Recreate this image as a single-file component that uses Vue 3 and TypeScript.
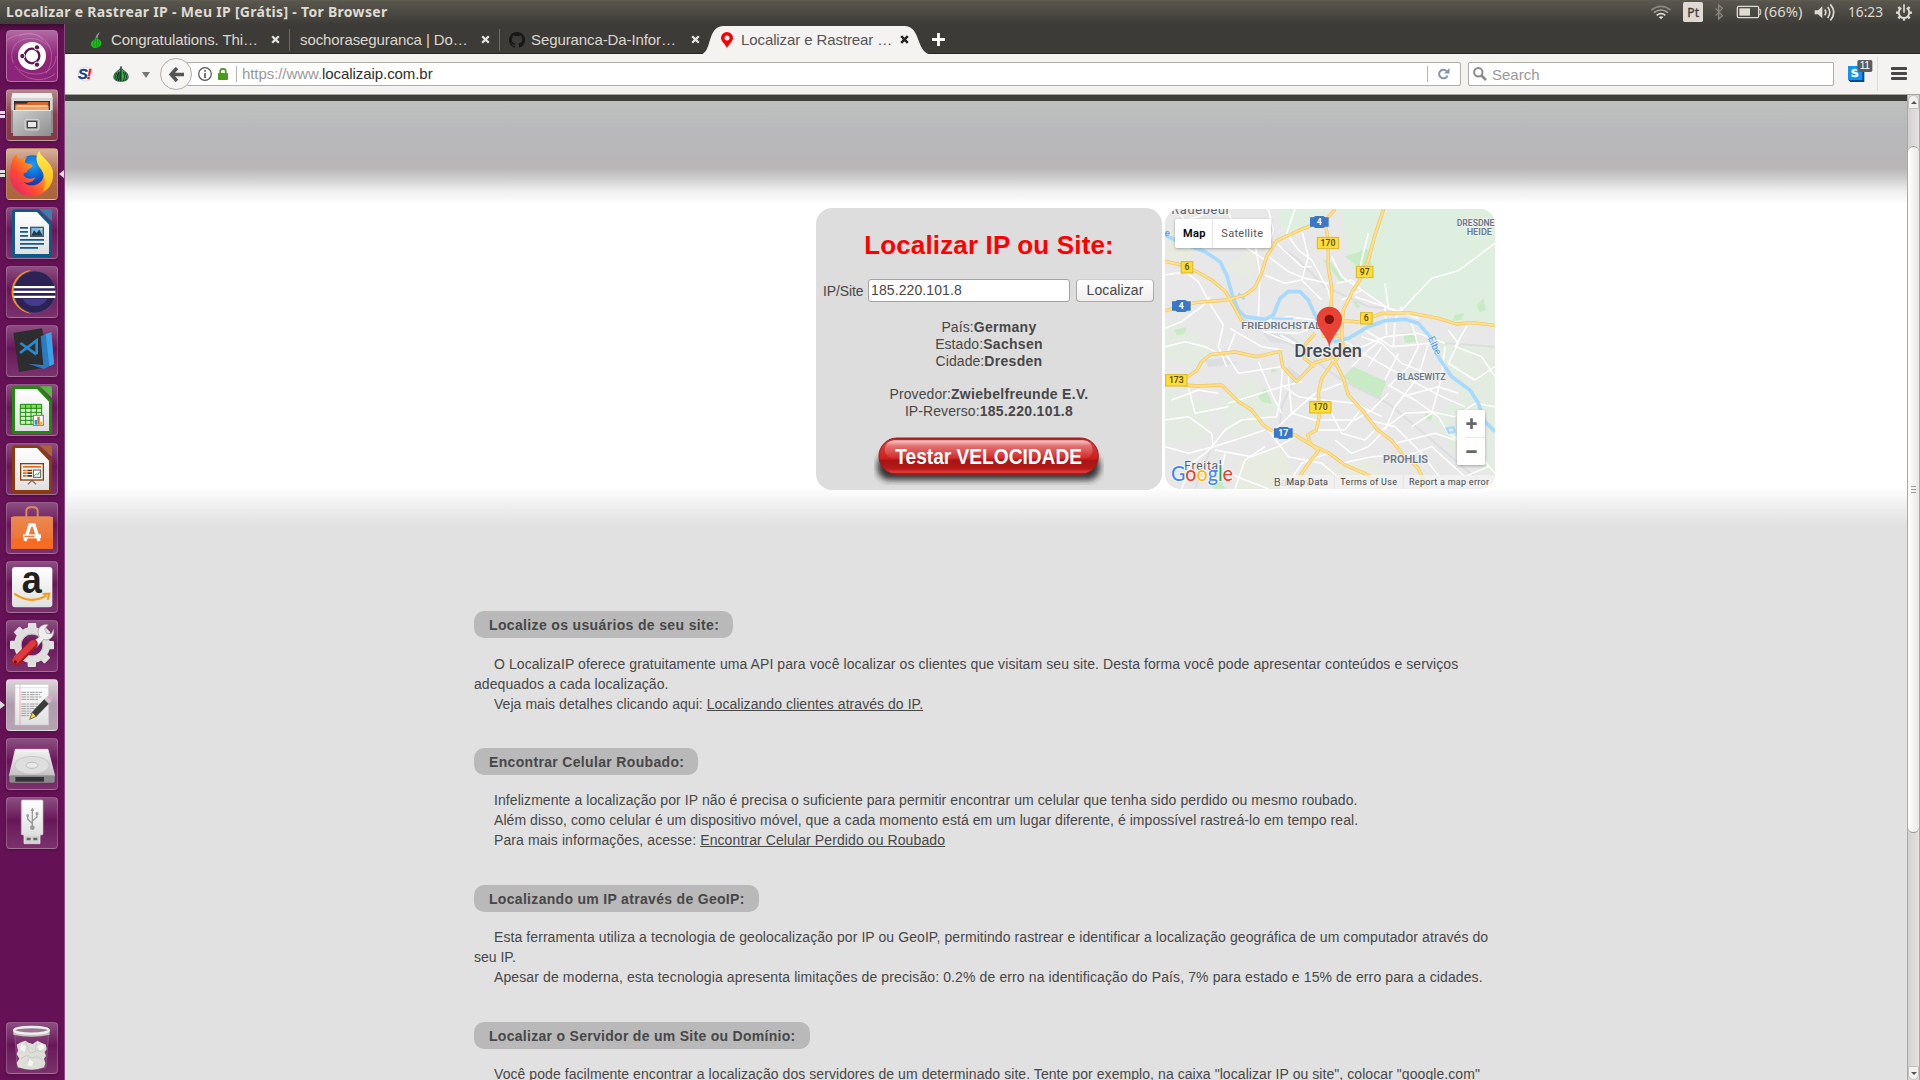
<script setup lang="ts">
interface Tab { title: string; kind: string; width: number }
interface Line { text: string; link?: string; indent: boolean; ls: number }
interface Section { title: string; ls: number; lines: Line[] }

const tabs: Tab[] = [
  { title: 'Congratulations. Thi…', kind: 'onion', width: 211 },
  { title: 'sochoraseguranca | Do…', kind: 'none', width: 210 },
  { title: 'Seguranca-Da-Infor…', kind: 'github', width: 203 },
]

const sections: Section[] = [
  {
    title: 'Localize os usuários de seu site:', ls: 0.35,
    lines: [
      { text: 'O LocalizaIP oferece gratuitamente uma API para você localizar os clientes que visitam seu site. Desta forma você pode apresentar conteúdos e serviços', indent: true, ls: 0.08 },
      { text: 'adequados a cada localização.', indent: false, ls: 0.08 },
      { text: 'Veja mais detalhes clicando aqui: ', link: 'Localizando clientes através do IP.', indent: true, ls: 0.053 },
    ],
  },
  {
    title: 'Encontrar Celular Roubado:', ls: 0.33,
    lines: [
      { text: 'Infelizmente a localização por IP não é precisa o suficiente para permitir encontrar um celular que tenha sido perdido ou mesmo roubado.', indent: true, ls: 0.08 },
      { text: 'Além disso, como celular é um dispositivo móvel, que a cada momento está em um lugar diferente, é impossível rastreá-lo em tempo real.', indent: true, ls: 0.055 },
      { text: 'Para mais informações, acesse: ', link: 'Encontrar Celular Perdido ou Roubado', indent: true, ls: 0.1 },
    ],
  },
  {
    title: 'Localizando um IP através de GeoIP:', ls: 0.31,
    lines: [
      { text: 'Esta ferramenta utiliza a tecnologia de geolocalização por IP ou GeoIP, permitindo rastrear e identificar a localização geográfica de um computador através do', indent: true, ls: 0.08 },
      { text: 'seu IP.', indent: false, ls: 0 },
      { text: 'Apesar de moderna, esta tecnologia apresenta limitações de precisão: 0.2% de erro na identificação do País, 7% para estado e 15% de erro para a cidades.', indent: true, ls: 0.115 },
    ],
  },
  {
    title: 'Localizar o Servidor de um Site ou Domínio:', ls: 0.29,
    lines: [
      { text: 'Você pode facilmente encontrar a localização dos servidores de um determinado site. Tente por exemplo, na caixa "localizar IP ou site", colocar "google.com"', indent: true, ls: 0.065 },
    ],
  },
]

const highways = [
  'M540 27 L515 58 L430 92 L365 122 L335 170 L318 225 L300 262 L270 285 L215 300 L120 308 L70 320 L30 333',
  'M30 184 L80 195 L120 212 L170 240 L212 275 L240 325 L262 365 L290 382',
  'M510 60 L520 130 L520 205 L530 260 L528 330 L535 400',
  'M686 27 L660 105 L640 180 L615 240 L592 275 L565 330 L560 400 L565 450 L540 485',
  'M565 362 L610 366 L680 340 L760 338 L850 355 L905 372 L950 368 L1020 376',
  'M30 535 L95 532 L125 512 L140 485 L165 464 L240 456 L305 470 L375 454 L383 500 L425 545 L480 488 L540 470',
  'M30 540 L65 552 L125 558 L200 555 L250 605 L290 630 L325 675 L350 692 L420 705 L470 735 L520 758 L570 795 L640 825 L680 866',
  'M535 485 L500 535 L490 580 L494 640 L484 690 L458 705 L466 730 L490 752 L450 805 L430 835',
  'M540 485 L565 535 L580 585 L625 635 L668 690 L710 722 L745 765 L790 805 L815 866',
  'M480 400 L452 432 L448 475 L480 500', 'M500 408 L560 408',
]
const streets = [
  'M30 225 L90 215 L130 245 L170 320 L205 375 L190 440 L215 500', 'M30 385 L80 365 L140 320 L165 290',
  'M30 440 L90 425 L150 440 L190 460', 'M60 27 L90 60 L130 50 L180 27', 'M150 100 L200 130 L240 120 L330 180',
  'M215 27 L240 80 L300 130 L315 220 L310 350', 'M340 27 L355 90 L340 140', 'M420 27 L395 100 L430 150 L470 180 L520 270 L530 330',
  'M340 170 L400 215 L450 235 L520 250', 'M330 225 L390 250 L440 240 L500 300', 'M365 130 L440 200 L470 200', 'M440 90 L460 170 L440 240',
  'M530 170 L560 230 L620 270 L700 325 L735 335', 'M735 335 L830 235 L910 212 L1020 130', 'M545 250 L590 240 L620 270 L560 300', 'M600 290 L690 320 L695 405',
  'M740 320 L720 360 L715 440', 'M640 100 L620 180 L610 230', 'M690 250 L700 325 L790 355', 'M320 365 L400 350 L480 360 L500 390', 'M313 365 L325 395 L440 440', 'M325 395 L430 400 L480 380',
  'M225 385 L320 440 L380 450', 'M240 400 L215 465 L250 520 L380 500', 'M375 405 L450 445', 'M380 555 L430 590 L500 600 L600 610 L680 650', 'M383 500 L375 600 L365 650 L260 660 L210 690 L170 740',
  'M220 610 L380 560 L440 545', 'M310 485 L350 580 L380 640', 'M400 530 L410 640 L480 660 L600 660 L650 630 L700 580', 'M350 700 L400 650 L480 580 L560 550', 'M520 620 L560 700 L630 720 L660 690', 'M480 690 L570 690 L620 625',
  'M565 420 L640 470 L720 515 L860 590 L930 620', 'M590 500 L640 450 L690 410', 'M630 390 L710 440 L770 435 L820 430', 'M620 410 L680 430 L740 490 L840 530', 'M640 500 L680 440', 'M690 540 L730 460',
  'M700 560 L760 500 L790 440 L770 370', 'M600 450 L690 410 L790 400 L870 430', 'M820 430 L790 530 L720 620 L690 690', 'M870 440 L860 530 L830 640 L770 680', 'M700 555 L780 600 L850 650 L880 700 L960 750 L1020 820', 'M740 590 L850 560 L910 580',
  'M680 690 L750 640 L830 635 L900 650 L960 610 L1020 620', 'M880 390 L910 430 L880 490 L960 540 L1020 500', 'M940 370 L900 440 L980 470 L1020 530', 'M640 660 L720 680 L800 760 L880 866', 'M720 730 L840 700 L900 720', 'M750 770 L830 740 L930 830 L1000 800',
  'M50 600 L130 570 L190 580', 'M100 560 L120 640 L220 620', 'M30 660 L100 650 L170 700 L175 740', 'M175 740 L110 790 L80 866', 'M175 740 L240 720 L330 690', 'M180 750 L290 770 L370 740 L420 710', 'M240 866 L270 780 L330 740', 'M210 760 L200 810 L270 840 L340 866',
  'M340 690 L400 770 L500 790 L560 840', 'M390 866 L440 790 L520 760', 'M30 740 L100 760 L175 740', 'M540 720 L590 760 L640 740 L680 700', 'M560 790 L650 770 L740 765',
]
const shields = [
  { x: 519, y: 129, w: 64, t: '170' }, { x: 96, y: 202, w: 35, t: '6' }, { x: 629, y: 216, w: 50, t: '97' },
  { x: 634, y: 355, w: 35, t: '6' }, { x: 64, y: 541, w: 64, t: '173' }, { x: 496, y: 622, w: 64, t: '170' },
]
const autobahn = [{ x: 493, y: 66, t: '4' }, { x: 79, y: 318, t: '4' }, { x: 385, y: 699, t: '17' }]
const teeth = [45, 90, 135, 180, 225, 270, 315]
</script>

<template>
  <div class="desktop">
    <header class="panel">
      <span class="win-title">Localizar e Rastrear IP - Meu IP [Grátis] - Tor Browser</span>
      <svg class="tray" viewBox="750 0 810 72">
        <g fill="none" stroke="#8b897f" stroke-width="5">
          <path d="M754 30q29-22 58 0" /><path d="M762 38q21-16 42 0" stroke="#a9a69c" />
          <path d="M770 46q13-10 26 0" stroke="#dfdbd2" />
        </g>
        <path d="M776 51q7-4 14 0l-7 7z" fill="#dfdbd2" />
        <rect x="849" y="6" width="60" height="60" rx="5" fill="#dfdbd2" />
        <text x="862" y="51" class="kbd" font-size="38" textLength="35" lengthAdjust="spacingAndGlyphs">Pt</text>
        <path d="M947 25l20 22-11 10V15l11 10-20 22" fill="none" stroke="#8b897f" stroke-width="4" />
        <rect x="1012" y="19" width="64" height="34" rx="4" fill="none" stroke="#dfdbd2" stroke-width="4" />
        <rect x="1018" y="25" width="32" height="22" fill="#dfdbd2" /><path d="M1077 29h5v14h-5" fill="none" stroke="#dfdbd2" stroke-width="3" />
        <text x="1093" y="51" font-size="42" textLength="114" lengthAdjust="spacingAndGlyphs">(66%)</text>
        <path d="M1244 31h10l13-12v36l-13-12h-10z" fill="#dfdbd2" />
        <path d="M1274 29q7 8 0 17M1283 21q13 16 0 33M1291 13q21 24 0 48" fill="none" stroke="#dfdbd2" stroke-width="5" />
        <text x="1344" y="51" font-size="42" textLength="105" lengthAdjust="spacingAndGlyphs">16:23</text>
        <g stroke="#dfdbd2" fill="none">
          <path d="M1504 24a16 16 0 1 0 16 0" stroke-width="6" /><path d="M1512 13v25" stroke-width="5" />
          <path v-for="a in teeth" :key="a" d="M1512 14v7" :transform="`rotate(${a} 1512 38)`" stroke-width="7" />
        </g>
      </svg>
    </header>

    <div class="workspace">
      <aside class="launcher">
        <svg class="shared" width="0" height="0">
          <defs>
            <linearGradient id="paper" x1="0" y1="0" x2="0" y2="1"><stop offset="0" stop-color="#fff" /><stop offset="1" stop-color="#e0e0e0" /></linearGradient>
            <linearGradient id="metal" x1="0" y1="0" x2="0" y2="1"><stop offset="0" stop-color="#f2f2f2" /><stop offset="1" stop-color="#c2c2c2" /></linearGradient>
            <linearGradient id="drawer" x1="0" y1="0" x2="1" y2="1"><stop offset="0" stop-color="#cfcfcf" /><stop offset="1" stop-color="#8e8e8e" /></linearGradient>
            <linearGradient id="bag" x1="0" y1="0" x2="0" y2="1"><stop offset="0" stop-color="#e98a52" /><stop offset="1" stop-color="#f26a26" /></linearGradient>
            <linearGradient id="fox" x1="1" y1="0" x2="0" y2="1"><stop offset="0" stop-color="#fff44f" /><stop offset=".35" stop-color="#ffa11c" /><stop offset=".65" stop-color="#ff4a32" /><stop offset="1" stop-color="#e0148c" /></linearGradient>
            <linearGradient id="flame" x1="0" y1="0" x2="0" y2="1"><stop offset="0" stop-color="#fff24a" /><stop offset="1" stop-color="#ffb01c" /></linearGradient>
            <radialGradient id="globe" cx=".5" cy=".3" r=".7"><stop offset="0" stop-color="#1ba0f5" /><stop offset=".7" stop-color="#0a50c8" /><stop offset="1" stop-color="#3a1a80" /></radialGradient>
          </defs>
        </svg>

        <div class="tile ubuntu"><svg viewBox="0 0 156 156">
          <g fill="none" stroke="#dca5d0" stroke-width="2" opacity=".6"><path d="M22 100C-4 30 80 0 130 50M40 18c60-30 130 40 80 112M150 78c0 50-60 70-110 40" /><path d="M28 108c30 50 90 50 120 22M4 30C30 10 90 0 110 30" /></g>
          <circle cx="78" cy="78" r="42" fill="#fff" /><circle cx="78" cy="78" r="22" fill="none" stroke="#5e1750" stroke-width="7" />
          <g fill="#5e1750" stroke="#fff" stroke-width="3"><circle cx="49" cy="78" r="8" /><circle cx="93" cy="52" r="8" /><circle cx="93" cy="104" r="8" /></g>
        </svg></div>
        <div class="tile files"><svg viewBox="0 0 156 156">
          <path d="M15 28l4-16h118l4 16v104H15z" fill="#8d8d8d" /><path d="M19 12h118l3 17H16z" fill="#f0f0f0" />
          <path d="M16 26h124v38H16z" fill="#d5d5d5" /><path d="M24 36h108v34H24z" fill="#333" /><path d="M28 44h34l5-5h60v30H28z" fill="#d8672e" /><path d="M28 50h100v18H28z" fill="#f4a15d" /><path d="M32 49h92v3H32z" fill="#fff" />
          <path d="M21 63h114v78H21z" fill="url(#drawer)" /><path d="M21 63h114v3H21z" fill="#eee" />
          <rect x="57" y="91" width="42" height="32" rx="5" fill="#b9b9b9" stroke="#e8e8e8" stroke-width="2" /><rect x="64" y="97" width="28" height="19" fill="#e8e8e8" stroke="#444" stroke-width="4" />
        </svg><i class="pips two" /></div>
        <div class="tile firefox"><svg viewBox="0 0 156 156">
          <circle cx="80" cy="70" r="48" fill="url(#globe)" />
          <path d="M18 42c2-14 10-20 14-24 0 10 4 14 10 16 10-4 14-6 22-7-6 6-8 12-6 18 8 2 18 2 22 8-2 6-12 10-16 14 2 8-10 6-12 12 2 12 24 18 36 8-4 14-22 22-36 14 16 18 52 14 60-14 4-18-4-30-16-44-8-14-2-26 4-34 2 14 20 22 32 46 22 48-12 90-54 90C40 145 12 118 12 82c0-16 2-28 6-40z" fill="url(#fox)" />
          <path d="M100 9c2 18 34 30 40 58 6 34-10 56-30 64 8-12 12-40-4-66-18-22-18-40-6-56z" fill="url(#flame)" />
        </svg><i class="pips two" /><i class="active-mark" /></div>
        <div class="tile"><svg viewBox="0 0 156 156">
          <path d="M18 14q0-7 7-7h73l40 42v93q0 8-8 8H25q-7 0-7-8z" fill="#0d5a8a" /><path d="M102 7h30q6 0 6 6v29z" fill="#3c7fae" />
          <path d="M27 15h66l36 38v88H27z" fill="url(#paper)" />
          <g fill="#0e5b8c"><path d="M42 60h24v5H42zM42 72h24v5H42zM42 84h24v5H42zM42 96h72v5H42zM42 108h72v5H42zM42 120h54v5H42z" /></g>
          <rect x="74" y="61" width="38" height="27" fill="#7dbce8" stroke="#3c5a72" stroke-width="4" /><path d="M76 86l8-16 8 8 8-10 10 18z" fill="#2b3b45" /><circle cx="106" cy="66" r="3" fill="#ffd94a" />
        </svg></div>
        <div class="tile"><svg viewBox="0 0 156 156">
          <path d="M75 12A66 66 0 0 0 74 143A80 80 0 0 1 75 12z" fill="#f7941e" /><circle cx="86" cy="78" r="63" fill="#2c2255" stroke="#58508a" stroke-width="2" /><path d="M50 98h74q-10 22-37 22T50 98z" fill="#463a8c" />
          <path d="M24 60h122v7H23zM22 74h126v7H22zM23 89h125v7H24z" fill="#fff" />
        </svg></div>
        <div class="tile"><svg viewBox="0 0 156 156">
          <path d="M22 24l86-14 25 115-94 16z" fill="#2d2d30" /><path d="M104 34l32-13 8 96-30 15-48-16 46 4z" fill="#2a7bc0" /><path d="M119 27l17-6 8 96-14 7z" fill="#3ea0e6" />
          <path d="M43 54l48 34M42 84l50-38v42" fill="none" stroke="#2a8ad0" stroke-width="8" />
        </svg></div>
        <div class="tile"><svg viewBox="0 0 156 156">
          <path d="M18 14q0-7 7-7h73l40 42v93q0 8-8 8H25q-7 0-7-8z" fill="#1f8a0c" /><path d="M102 7h30q6 0 6 6v29z" fill="#58b845" /><path d="M27 15h66l36 38v88H27z" fill="url(#paper)" />
          <path d="M43 61h64v60H43z" fill="#d9f5cd" /><path d="M43 61h64v12H43z" fill="#7fdc5f" /><path d="M43 61h64v60H43zM43 73h64M43 85h64M43 97h64M43 109h64M59 61v60M75 61v60M91 61v60" fill="none" stroke="#178a08" stroke-width="3" />
          <rect x="82" y="94" width="30" height="30" fill="#fff" stroke="#777" stroke-width="3" /><path d="M86 108h7v14h-7z" fill="#2196e0" /><path d="M94 98h7v24h-7z" fill="#e0651c" /><path d="M102 113h7v9h-7z" fill="#f3b820" />
        </svg></div>
        <div class="tile"><svg viewBox="0 0 156 156">
          <path d="M18 14q0-7 7-7h73l40 42v93q0 8-8 8H25q-7 0-7-8z" fill="#8a3c0c" /><path d="M102 7h30q6 0 6 6v29z" fill="#ad642f" /><path d="M27 15h66l36 38v88H27z" fill="url(#paper)" />
          <path d="M66 124l12-12 12 12" fill="none" stroke="#777" stroke-width="4" /><rect x="44" y="62" width="68" height="49" fill="#fffaf4" stroke="#8a3c0c" stroke-width="4" /><path d="M51 69h54v5H51z" fill="#e06a20" />
          <path d="M51 80h11v5H51zM51 88h11v5H51zM51 96h11v5H51z" fill="#e06a20" /><path d="M64 80h14v5H64zM64 88h14v5H64zM64 96h14v5H64z" fill="#6b2d08" /><rect x="82" y="81" width="22" height="22" fill="#fff" stroke="#555" stroke-width="3" /><path d="M85 98l6-5 4 3 6-10" fill="none" stroke="#27a036" stroke-width="3" />
        </svg></div>
        <div class="tile"><svg viewBox="0 0 156 156">
          <path d="M15 46l10-3h106l10 3v94H15z" fill="url(#bag)" /><path d="M15 110h126v30H15z" fill="#f56c22" /><path d="M61 52V28q0-13 17-13t17 13v24" fill="none" stroke="#d98a62" stroke-width="6" />
          <path d="M57 117l15-48h12l15 48" fill="none" stroke="#fff" stroke-width="10" /><path d="M51 97h54v12H51z" fill="#fff" /><path d="M55 101h30v4H55z" fill="#f0783a" />
        </svg></div>
        <div class="tile"><svg viewBox="0 0 156 156">
          <rect x="18" y="18" width="121" height="121" rx="10" fill="url(#paper)" /><text x="47" y="95" class="amazon" textLength="60" lengthAdjust="spacingAndGlyphs">a</text>
          <path d="M25 98q48 34 96 6" fill="none" stroke="#f79b10" stroke-width="6" /><path d="M110 99l20-1-5 18" fill="none" stroke="#f79b10" stroke-width="6" />
        </svg></div>
        <div class="tile"><svg viewBox="0 0 156 156">
          <g fill="#e2e2e2"><rect v-for="a in [0, 45, 90, 135, 180, 225, 270, 315]" :key="a" x="66" y="9" width="25" height="30" rx="3" :transform="`rotate(${a} 78 75)`" /></g>
          <circle cx="78" cy="75" r="43" fill="none" stroke="#dedede" stroke-width="22" /><circle cx="78" cy="75" r="33" fill="none" stroke="#bcbcbc" stroke-width="3" />
          <path d="M100 50c-12-22 6-40 26-36l-10 14 6 12 14 1 7-13c4 24-16 36-30 30L92 82 78 68z" fill="#eee" stroke="#999" stroke-width="2" /><path d="M30 124l52-52" stroke="#a91b1e" stroke-width="27" stroke-linecap="round" /><path d="M29 122l52-52" stroke="#dc3a3d" stroke-width="19" stroke-linecap="round" /><circle cx="28" cy="126" r="5" fill="#701014" />
        </svg></div>
        <div class="tile editor"><svg viewBox="0 0 156 156">
          <path d="M27 16h101v122H27z" fill="url(#paper)" stroke="#c8c8c8" stroke-width="2" /><path d="M42 16v122" stroke="#ee9a9a" stroke-width="2" /><path d="M27 26h101" stroke="#b9d9ff" stroke-width="2" />
          <path d="M46 40h62M46 47h56M46 54h60M46 61h50M46 75h54M46 82h48M46 89h44M46 96h30M46 103h34M46 110h26" stroke="#8c8c8c" stroke-width="2.5" stroke-dasharray="14 2 8 2" />
          <path d="M71 121l8-22 12 13z" fill="#e9d44a" stroke="#4a441a" stroke-width="2" /><path d="M79 99l36-38 13 13-37 38z" fill="#3c3c3c" stroke="#222" /><path d="M115 61l8-8 14 13-9 8z" fill="#c8c8c8" /><path d="M123 53q9-9 17 1 1 6-4 11z" fill="#eca0cc" />
        </svg><i class="pips one" /></div>
        <div class="tile"><svg viewBox="0 0 156 156">
          <path d="M28 34h98l20 80H10z" fill="url(#metal)" stroke="#eee" stroke-width="2" /><path d="M10 112h136v18q0 4-5 4H15q-5 0-5-4z" fill="#8b8b8b" /><path d="M28 117h86v14H28z" fill="#333" /><ellipse cx="78" cy="82" rx="52" ry="27" fill="#dedede" stroke="#bdbdbd" stroke-width="2" /><ellipse cx="78" cy="82" rx="18" ry="9" fill="#e8e8e8" stroke="#aaa" stroke-width="2" />
        </svg></div>
        <div class="tile"><svg viewBox="0 0 156 156">
          <rect x="46" y="9" width="65" height="105" rx="4" fill="url(#paper)" stroke="#bbb" stroke-width="2" /><path d="M54 114h48v26H54z" fill="#d2d2d2" stroke="#eee" stroke-width="2" /><path d="M62 122h12v8H62zM82 122h12v8H82z" fill="#666" />
          <path d="M79 92V38M79 80l-14-14V56M79 72l14-12V50" fill="none" stroke="#999" stroke-width="4" /><path d="M79 32l6 10H73z" fill="#999" /><circle cx="79" cy="92" r="7" fill="#999" /><circle cx="65" cy="56" r="4" fill="#999" /><path d="M89 46h8v8h-8z" fill="#999" />
        </svg></div>
        <div class="tile trash"><svg viewBox="0 0 156 156">
          <path d="M26 38l8 98q42 14 86 0l8-98z" fill="rgba(255,255,255,.08)" stroke="rgba(255,255,255,.25)" stroke-width="2" />
          <path d="M32 68l14-8 12-4 10 6 12 4 14-10 12 6 14 6 2 14-6 8 4 12-6 8 4 14-4 12q-36 14-78 0l-4-14 8-12-8-14 4-10z" fill="#deded9" /><path d="M42 72l20 6 12 16 18-8 20 4M44 110l18-10 16 8 14-4 18 8M58 60l10 20M92 62l-4 22M66 110l10 26" fill="none" stroke="#c0c0ba" stroke-width="2" />
          <path d="M46 64l14 10-4 16-14-8zM94 74l14-10 8 12-14 10zM70 112l12 8-4 14-14-4z" fill="#f4f4f1" />
          <path d="M22 24v14q54 12 109 0V24z" fill="#c6c6c0" /><ellipse cx="76.500" cy="25" rx="52" ry="10" fill="#9a7a92" stroke="#efefec" stroke-width="7" />
        </svg></div>
      </aside>

      <main class="browser">
        <div class="tabbar">
          <div v-for="t in tabs" :key="t.title" class="tab" :class="t.kind" :style="{ width: t.width + 'px' }">
            <svg v-if="t.kind === 'onion'" class="fav" viewBox="0 0 48 48"><path d="M22 20q2-14 14-20-7 12-8 20z" fill="#9a9a9a" /><path d="M25 14q0 6 10 10 8 6 4 16-6 8-14 8-14 0-16-10-1-10 9-14 6-4 7-10z" fill="#17c21a" /><path d="M25 18v28M19 24q-5 10 0 20M31 24q5 10 0 20" stroke="#0b7a0e" stroke-width="2" fill="none" /></svg>
            <svg v-if="t.kind === 'github'" class="fav" viewBox="0 0 16 16"><path fill="#191717" d="M8 0C3.580 0 0 3.580 0 8c0 3.540 2.290 6.530 5.470 7.590.4.070.55-.17.55-.38v-1.340c-2.230.48-2.700-1.070-2.700-1.070-.36-.92-.89-1.170-.89-1.170-.73-.5.06-.49.06-.49.8.06 1.230.83 1.230.83.71 1.220 1.870.87 2.330.66.070-.52.28-.87.51-1.070-1.780-.2-3.640-.89-3.640-3.950 0-.87.31-1.590.82-2.150-.08-.2-.36-1.020.08-2.120 0 0 .67-.21 2.200.82a7.600 7.600 0 0 1 4 0c1.530-1.040 2.200-.82 2.200-.82.44 1.100.16 1.920.08 2.120.51.56.82 1.270.82 2.150 0 3.070-1.870 3.750-3.650 3.950.29.250.54.73.54 1.480v2.190c0 .21.15.46.55.38A8 8 0 0 0 8 0z" /></svg>
            <span class="tab-title">{{ t.title }}</span>
            <svg class="close" viewBox="0 0 9 9"><path d="M1.200 1.200l6.600 6.600M7.800 1.200L1.200 7.800" stroke="#e6e6e0" stroke-width="2.300" /></svg>
          </div>
          <div class="tab current">
            <svg class="tab-shape" viewBox="0 0 234 29" preserveAspectRatio="none"><path d="M0 29C14 28 7 1 24 0H206C223 1 216 28 234 29z" fill="#f4f3f2" /></svg>
            <svg class="pin-fav" viewBox="0 0 12 16"><path fill-rule="evenodd" d="M6 0a6 6 0 0 1 6 6c0 3-4 6-6 10C4 12 0 9 0 6a6 6 0 0 1 6-6zm0 3.500a2.500 2.500 0 1 0 0 5 2.500 2.500 0 0 0 0-5z" fill="#fb0000" /></svg>
            <span class="tab-title">Localizar e Rastrear …</span>
            <svg class="close" viewBox="0 0 9 9"><path d="M1.200 1.200l6.600 6.600M7.800 1.200L1.200 7.800" stroke="#222" stroke-width="2.500" /></svg>
          </div>
          <svg class="plus" viewBox="0 0 13 13"><path d="M6.500 0v13M0 6.500h13" stroke="#fff" stroke-width="2.800" /></svg>
        </div>

        <nav class="navbar">
          <svg class="ext" viewBox="0 0 48 48"><circle cx="25" cy="24" r="21" fill="#fff" stroke="#ccc" stroke-width="2" /><text x="3" y="40" class="ns-s">S</text><text x="29" y="40" class="ns-b">!</text></svg>
          <svg class="tor" viewBox="0 0 48 48"><path d="M24 1q1 9 9 13 13 8 13 18 0 14-22 14T2 32q0-10 13-18 8-4 9-13z" fill="#3fae55" stroke="#222" stroke-width="2" /><path d="M24 5v40q-10-2-12-12 0-10 10-17z" fill="#1f5c33" /><path d="M24 8v38M31 17q8 14 0 28M36 19q9 14 2 24M17 17q-9 14 0 28M11 21q-8 12 0 21" fill="none" stroke="#101c14" stroke-width="2.500" /></svg>
          <svg class="caret" viewBox="0 0 8 6"><path d="M0 0h8L4 6z" fill="#777" /></svg>
          <div class="back"><svg viewBox="0 0 15 15"><path d="M8 1L2 7.500 8 14M2 7.500h13" fill="none" stroke="#555" stroke-width="3.400" /></svg></div>
          <div class="urlbar">
            <svg class="info" viewBox="0 0 14 14"><circle cx="7" cy="7" r="6.300" fill="none" stroke="#555" stroke-width="1.200" /><path d="M7 6v5M7 3v1.800" stroke="#555" stroke-width="1.600" /></svg>
            <svg class="lock" viewBox="0 0 10 12"><path d="M2.200 6V3.600a2.800 2.800 0 0 1 5.600 0V6" fill="none" stroke="#4e9a1e" stroke-width="1.700" /><rect y="5" width="10" height="7" rx=".8" fill="#4e9a1e" /></svg>
            <span class="divider" />
            <span class="url"><span class="proto">https://www.</span>localizaip.com.br</span>
            <span class="divider right" />
            <svg class="reload" viewBox="0 0 12 12"><path d="M9.500 7.500A4.300 4.300 0 1 1 8.500 3" fill="none" stroke="#8494a4" stroke-width="2" /><path d="M11.500 0v5.500H6z" fill="#8494a4" /></svg>
          </div>
          <div class="search"><svg viewBox="0 0 14 14"><circle cx="5.300" cy="5.300" r="4.200" fill="none" stroke="#8b8b8b" stroke-width="2" /><path d="M8.500 8.500l4.500 4.500" stroke="#8b8b8b" stroke-width="2.600" /></svg><span>Search</span></div>
          <svg class="stylish" viewBox="0 0 75 66"><path d="M1 18h42l6 6v42H7l-6-6z" fill="#004a87" /><path d="M1 18h42v42H1z" fill="#0996f8" /><text x="8" y="51" class="st-s">S</text><rect x="28" y="0" width="45" height="36" rx="5" fill="#5c5c5c" /><text x="35" y="28" class="st-n" textLength="31">11</text></svg>
          <span class="nav-sep" />
          <div class="menu"><i /><i /><i /></div>
        </nav>

        <div class="viewport">
          <div class="page">
            <div class="hero">
              <div class="card">
                <h1>Localizar IP ou Site:</h1>
                <form class="lookup" @submit.prevent>
                  <label>IP/Site</label><input type="text" value="185.220.101.8" /><button type="button">Localizar</button>
                </form>
                <div class="facts">
                  <div>País:<b>Germany</b></div><div>Estado:<b>Sachsen</b></div><div>Cidade:<b>Dresden</b></div><div>&nbsp;</div>
                  <div>Provedor:<b>Zwiebelfreunde E.V.</b></div><div>IP-Reverso:<b>185.220.101.8</b></div>
                </div>
                <svg class="speed" viewBox="0 0 690 150">
                  <defs>
                    <linearGradient id="red" x1="0" y1="0" x2="0" y2="1"><stop offset="0" stop-color="#b01a1a" /><stop offset=".12" stop-color="#d83a3a" /><stop offset=".55" stop-color="#cf2020" /><stop offset=".62" stop-color="#a81414" /><stop offset=".85" stop-color="#b81a1a" /><stop offset=".94" stop-color="#e83c3c" /><stop offset="1" stop-color="#8d1010" /></linearGradient>
                    <linearGradient id="gloss" x1="0" y1="0" x2="0" y2="1"><stop offset="0" stop-color="#fff" stop-opacity=".75" /><stop offset=".3" stop-color="#fff" stop-opacity=".3" /><stop offset="1" stop-color="#fff" stop-opacity=".03" /></linearGradient>
                    <filter id="soft" x="-10%" y="-50%" width="120%" height="200%"><feGaussianBlur stdDeviation="9" /></filter>
                  </defs>
                  <rect x="10" y="55" width="668" height="80" rx="37" fill="#222" opacity=".9" filter="url(#soft)" />
                  <rect x="15" y="9" width="658" height="109" rx="54" fill="url(#red)" stroke="#96201f" stroke-width="3" /><rect x="32" y="16" width="624" height="56" rx="28" fill="url(#gloss)" />
                  <text x="64" y="86" textLength="560" lengthAdjust="spacingAndGlyphs">Testar VELOCIDADE</text>
                </svg>
              </div>

              <div class="map">
                <svg viewBox="30 27 990 840">
                  <rect x="30" y="27" width="990" height="840" fill="#e8e8e8" />
                  <path d="M560 27h460v345l-120-5-90-30-90-14-100-55-40-100z" fill="#deefdf" /><path d="M370 27h150l-25 35-110 40z" fill="#deefdf" />
                  <path d="M30 360l90 40 60 70-60 30-90-30zM30 570l150 40-30 100-120 20zM200 590l90-60 80 90-100 100-60-30zM830 420l190 20v240l-90-60-60-110z" fill="#e4ece1" />
                  <path d="M250 780l130-40 60 126H240zM500 800l160-20 60 86H530zM60 60l100 50-70 80-60-20zM200 200l110-60-20 100z" fill="#e8ebe0" /><path d="M820 650l150-80 50 80v180l-110-60z" fill="#e2ece0" />
                  <path d="M570 170l70-24 10 50-40 5zM565 530l30-30 100 45-20 50-60-22zM500 175l30 15 40 55-10 5zM600 300l18 20-14 5-10-18zM745 400l30-4 14 30-40 2zM900 345l28-6-8 20-28 4zM965 315l20-20 8 35-20 8zM810 640l22 6-4 18-14-8zM310 590l20-28 22 50-30-5zM60 390l34-8-6 20-24 4zM350 500l18 14-20 4zM170 840l30 6 10 20h-35z" fill="#c8ebc5" />
                  <path d="M318 395l90 10 30 30-90-8zM400 500l40 30-20 20-30-35zM150 480l50-6 50 16-90 12z" fill="#dcdee1" />
                  <g fill="none" stroke="#dcdde0" stroke-width="6"><path d="M280 80L420 170 510 260 640 320 700 325M250 350L420 440 560 540 700 610 830 720 1000 866M420 530L380 620 370 720M870 430L1020 440M170 740L120 866" /></g>
                  <g fill="none" stroke="#fff" stroke-width="4.500" stroke-linejoin="round"><path v-for="(d, i) in streets" :key="i" :d="d" /></g>
                  <path d="M30 105L60 120 150 155 195 185 215 225 230 280 250 330 270 350 330 358 355 345 375 295 400 274 435 275 460 300 480 345 505 400 540 425 580 415 640 380 690 362 750 358 790 370 825 410 850 470 890 530 945 570 970 610 990 665 1020 695" fill="none" stroke="#a8dafd" stroke-width="11" stroke-linejoin="round" />
                  <path d="M350 356h65M250 280l18 18M875 685l20-4 5 14-18 4z" fill="none" stroke="#a8dafd" stroke-width="7" />
                  <g fill="none" stroke="#f0c35c" stroke-width="10" stroke-linejoin="round"><path v-for="(d, i) in highways" :key="i" :d="d" /></g>
                  <g fill="none" stroke="#fee08a" stroke-width="6.500" stroke-linejoin="round"><path v-for="(d, i) in highways" :key="i" :d="d" /></g>
                  <g class="shield"><g v-for="(s, i) in shields" :key="i"><rect :x="s.x - s.w / 2" :y="s.y - 17" :width="s.w" height="34" fill="#fddc3b" stroke="#d9b822" stroke-width="3" /><text :x="s.x" :y="s.y + 9" text-anchor="middle">{{ s.t }}</text></g></g>
                  <g class="auto"><g v-for="(s, i) in autobahn" :key="i"><path :transform="`translate(${s.x} ${s.y})`" d="M-28-14h10l6-4h24l6 4h10v28h-10l-6 4h-24l-6-4h-10z" fill="#3a77c4" /><text :x="s.x" :y="s.y + 10" text-anchor="middle">{{ s.t }}</text></g></g>
                  <g class="place">
                    <text x="49" y="41" font-size="38" textLength="172">Radebeul</text>
                    <text x="905" y="78" class="area" font-size="25" textLength="130" lengthAdjust="spacingAndGlyphs">DRESDNER</text><text x="935" y="105" class="area" font-size="25" textLength="76" lengthAdjust="spacingAndGlyphs">HEIDE</text>
                    <text x="259" y="388" class="area" font-size="29" textLength="262" lengthAdjust="spacingAndGlyphs">FRIEDRICHSTADT</text><text x="726" y="540" class="area" font-size="26" textLength="146" lengthAdjust="spacingAndGlyphs">BLASEWITZ</text>
                    <text x="684" y="790" class="area" font-size="30" textLength="135" lengthAdjust="spacingAndGlyphs">PROHLIS</text>
                    <text x="818" y="415" fill="#4a8fd8" font-size="30" transform="rotate(65 818 415)" stroke="#fff" stroke-width="2">Elbe</text>
                    <text x="27" y="105" fill="#4a8fd8" font-size="28" transform="rotate(20 27 105)">e</text>
                    <text x="88" y="811" font-size="36" textLength="112">Freital</text><text x="356" y="858" font-size="34">Bannewitz</text>
                    <text x="418" y="472" class="city" textLength="203" lengthAdjust="spacingAndGlyphs">Dresden</text>
                  </g>
                  <path d="M523 444c-3-34-38-54-38-86a38 38 0 0 1 76 0c0 32-35 52-38 86z" fill="#ea4335" /><circle cx="523" cy="358" r="14" fill="#811411" />
                  <text x="48" y="844" class="google" textLength="186" lengthAdjust="spacingAndGlyphs"><tspan fill="#4285f4">G</tspan><tspan fill="#ea4335">o</tspan><tspan fill="#fbbc05">o</tspan><tspan fill="#4285f4">g</tspan><tspan fill="#34a853">l</tspan><tspan fill="#ea4335">e</tspan></text>
                  <path d="M376 825h644v42H376z" fill="#f2f2f2" opacity=".8" /><path d="M538 825v42M745 825v42" stroke="#ddd" stroke-width="2" />
                  <g class="legal"><text x="394" y="855" textLength="125">Map Data</text><text x="556" y="855" textLength="170">Terms of Use</text><text x="762" y="855" textLength="240">Report a map error</text></g>
                  <g class="ctl"><rect x="60" y="57" width="288" height="87" rx="5" fill="#fff" /><rect x="906" y="630" width="84" height="165" rx="5" fill="#fff" /></g>
                  <path d="M172 57v87M933 712h57" stroke="#e4e4e4" stroke-width="3" />
                  <text x="84" y="111" class="mt on" textLength="67">Map</text><text x="199" y="111" class="mt" textLength="125">Satellite</text>
                  <path d="M934 671h31M949.500 655v32M934 755h31" stroke="#666" stroke-width="8" />
                </svg>
              </div>
            </div>

            <section v-for="s in sections" :key="s.title" class="topic">
              <h2><span :style="{ letterSpacing: s.ls + 'px' }">{{ s.title }}</span></h2>
              <div class="body">
                <p v-for="l in s.lines" :key="l.text" :class="{ indent: l.indent }" :style="{ letterSpacing: l.ls + 'px' }">{{ l.text }}<a v-if="l.link">{{ l.link }}</a></p>
              </div>
            </section>
          </div>

          <div class="scrollbar">
            <div class="arrow"><svg viewBox="0 0 6 3"><path d="M0 3h6L3 0z" fill="#555" /></svg></div>
            <div class="track"><div class="thumb"><i /><i /><i /></div></div>
            <div class="arrow down"><svg viewBox="0 0 6 3"><path d="M0 0h6L3 3z" fill="#555" /></svg></div>
          </div>
        </div>
      </main>
    </div>
  </div>
</template>

<style>
html, body { margin: 0; overflow: hidden; background: #e1e1e1; }
</style>

<style scoped>
* { box-sizing: border-box; }
.desktop { width: 1920px; height: 1080px; display: flex; flex-direction: column; overflow: hidden; font-family: "Liberation Sans", Arial, sans-serif; color: #474747; }
svg { display: block; flex: none; }
.panel { height: 24px; flex: none; display: flex; justify-content: space-between; align-items: center; background: linear-gradient(#5f5d50, #57554c 2px, #3d3c38); }
.win-title { margin-left: 6px; font: bold 14px/24px "Noto Sans", sans-serif; letter-spacing: .3px; color: #dfdbd2; white-space: nowrap; }
.tray { width: 270px; height: 24px; }
.tray text { font-family: "Noto Sans", sans-serif; fill: #dfdbd2; }
.tray .kbd { fill: #3c3b37; stroke: #3c3b37; stroke-width: 1px; }
.workspace { flex: 1; display: flex; min-height: 0; }
.launcher { width: 65px; flex: none; padding: 6px 0 6px 6px; display: flex; flex-direction: column; gap: 7px; border-right: 1px solid #8a4a7d; background: linear-gradient(#3d0a33, #651155 8px, #651155); }
.shared { position: absolute; }
.tile { position: relative; width: 52px; height: 52px; flex: none; border-radius: 4px; border: 1px solid rgba(255,255,255,.2); background: linear-gradient(rgba(255,255,255,.26), rgba(255,255,255,.02) 45%, rgba(255,255,255,.05) 55%, rgba(255,255,255,.14)); box-shadow: 0 1px 3px rgba(0,0,0,.25); }
.tile > svg { width: 52px; height: 52px; margin: -1px; }
.tile.ubuntu { background: linear-gradient(#b069a2, #8f2479 50%, #8b2577); border-color: #b374a7; }
.tile.files { background: linear-gradient(#b58a8e, #8a3b49 50%, #823947); }
.tile.firefox { background: linear-gradient(#d7b29b, #b06c48 50%, #a9653c); }
.tile.editor { background: linear-gradient(#dcd4db, #b09bac 50%, #b5a4b3); }
.trash { margin-top: auto; }
.pips { position: absolute; left: -7px; top: 21px; }
.pips.two { width: 5px; height: 7px; border-top: 3px solid #ddd; border-bottom: 3px solid #ddd; }
.pips.one { border: 4px solid transparent; border-left: 5px solid #ddd; border-right: 0; }
.active-mark { position: absolute; right: -7px; top: 21px; border: 4px solid transparent; border-right: 5px solid #ddd; border-left: 0; }
.amazon { font: bold 114px "Liberation Sans", sans-serif; fill: #221f1f; }

.browser { flex: 1; display: flex; flex-direction: column; min-width: 0; }
.tabbar { height: 30px; flex: none; display: flex; align-items: center; padding-left: 14px; background: #3c3b37; border-bottom: 1px solid #262622; }
.tab { height: 30px; display: flex; align-items: center; position: relative; flex: none; padding: 2px 9px 0 10px; }
.tab .tab-title { font-size: 15px; line-height: 20px; letter-spacing: -.1px; color: #dcd8ce; white-space: nowrap; flex: 1; }
.tab.onion, .tab.none { border-right: 1px solid transparent; }
.tab.onion::after, .tab.none::after { content: ""; position: absolute; right: -1px; top: 5px; width: 1px; height: 22px; background: #6d6c67; }
.fav { width: 16px; height: 16px; margin-right: 6px; }
.tab.onion .fav { margin: 0 7px 0 -1px; }
.tab.github { padding-right: 3px; }
.tab.github .fav { margin-left: -1px; }
.close { width: 9px; height: 9px; }
.tab.current { width: 234px; padding: 2px 24px 0 22px; margin-left: -4px; height: 30px; }
.tab-shape { position: absolute; left: 0; top: 2px; width: 234px; height: 29px; }
.tab.current .tab-title { color: #555; position: relative; }
.tab.current .close, .pin-fav { position: relative; }
.pin-fav { width: 12px; height: 16px; margin-right: 8px; }
.plus { width: 13px; height: 13px; margin: 2px 0 0 -1px; }
.navbar { height: 41px; flex: none; display: flex; align-items: center; background: #f4f3f2; border-bottom: 1px solid #a3a29d; }
.ext { width: 16px; height: 16px; margin-left: 12px; }
.ns-s { font: italic bold 44px "Liberation Sans", sans-serif; fill: #0d3b94; stroke: #0d3b94; }
.ns-b { font: italic bold 44px "Liberation Sans", sans-serif; fill: #e11; stroke: #e11; }
.tor { width: 16px; height: 16px; margin-left: 20px; }
.caret { width: 8px; height: 6px; margin: 2px 0 0 13px; }
.back { width: 32px; height: 32px; flex: none; margin-left: 10px; border-radius: 50%; border: 1px solid #b0aea9; background: #f7f6f5; display: flex; align-items: center; justify-content: center; z-index: 1; }
.back svg { width: 15px; height: 15px; }
.urlbar { width: 1275px; height: 24px; flex: none; margin-left: -6px; padding-left: 11px; display: flex; align-items: center; background: #fff; border: 1px solid #aeada8; border-radius: 2px; }
.info { width: 14px; height: 14px; }
.lock { width: 10px; height: 12px; margin-left: 6px; }
.divider { width: 1px; height: 16px; margin-left: 8px; background: #b5b4b0; }
.url { flex: 1; margin-left: 5px; font-size: 15px; line-height: 20px; letter-spacing: -.07px; color: #2e2e2e; white-space: nowrap; }
.proto { color: #999; }
.reload { width: 12px; height: 12px; margin: 0 10px 0 10px; }
.search { width: 366px; height: 24px; flex: none; margin-left: 7px; padding-left: 4px; display: flex; align-items: center; background: #fff; border: 1px solid #aeada8; border-radius: 2px; font-size: 15px; color: #999; }
.search svg { width: 14px; height: 14px; margin-right: 5px; }
.stylish { width: 25px; height: 22px; margin: -6px 0 0 14px; }
.st-s { font: bold 34px "DejaVu Sans", sans-serif; fill: #fff; stroke: #fff; }
.st-n { font: 31px "Liberation Sans", sans-serif; fill: #fff; }
.nav-sep { width: 1px; height: 34px; margin-left: 4px; background: #dddcd9; }
.menu { width: 16px; margin: -1px 0 0 13px; display: flex; flex-direction: column; gap: 2px; }
.menu i { height: 3px; background: #474747; border-radius: 1px; }

.viewport { flex: 1; display: flex; min-height: 0; }
.page { width: 1842px; overflow: hidden; background: linear-gradient(#3f3f3b 6px, #bfc1bf 6px, #b8b9bb 33px, #b8b6b7 73px, #cfcfcf 84px, #efefef 96px, #fff 109px, #fff 392px, #eeeeee 412px, #e1e1e1 432px); }
.hero { display: flex; gap: 3px; margin: 113px 0 121px 751px; height: 282px; align-items: center; }
.card { width: 346px; height: 282px; flex: none; background: #ddd; border-radius: 16px; display: flex; flex-direction: column; align-items: center; }
h1 { margin: 22px 0 0; font-size: 26px; line-height: 30px; letter-spacing: .15px; color: #f00; white-space: nowrap; }
.lookup { display: flex; align-items: center; align-self: stretch; margin-top: 19px; padding-left: 7px; font-size: 14px; height: 23px; }
.lookup label { width: 45px; letter-spacing: -.1px; }
.lookup input { width: 202px; height: 23px; padding: 0 2px 1px; font: 14px "Liberation Sans", sans-serif; letter-spacing: .1px; color: #474747; border: 1px solid #a3a29e; border-radius: 3px; background: #fff; }
.lookup button { width: 78px; height: 23px; margin-left: 6px; padding: 0 0 1px; font: 14px "Liberation Sans", sans-serif; letter-spacing: .1px; color: #474747; border: 1px solid #aaa; border-top-color: #ccc; border-radius: 4px; background: linear-gradient(#fff, #efeeec); }
.facts { margin-top: 17px; text-align: center; font-size: 14px; line-height: 16.800px; letter-spacing: .08px; white-space: nowrap; }
.facts b { letter-spacing: .3px; }
.speed { width: 230px; height: 50px; margin-top: 15px; }
.speed text { font: bold 64px "Liberation Sans", sans-serif; fill: #fff; }
.map { width: 330px; height: 280px; flex: none; border-radius: 15px; overflow: hidden; }
.map svg { width: 330px; height: 280px; }
.map text { font-family: Roboto, sans-serif; }
.shield text { font-size: 26px; font-weight: 500; fill: #54430a; }
.auto text { font-size: 26px; font-weight: 700; fill: #fff; }
.place text { paint-order: stroke; }
.place text:not([fill]) { fill: #55606b; stroke: #f3f3f3; stroke-width: 4px; }
.place .area { font-weight: 600; fill: #6a7886 !important; }
.place .city { font-size: 54px; font-weight: 500; fill: #444b54 !important; }
.map .google { font-family: Lato, sans-serif; font-size: 66px; font-weight: 500; stroke: #fff; stroke-width: 5px; paint-order: stroke; }
.legal text { font-size: 27px; fill: #444; }
.ctl { filter: drop-shadow(0 3px 5px rgba(0,0,0,.3)); }
.mt { font-size: 33px; fill: #565656; }
.mt.on { font-weight: 500; fill: #000; stroke: #000; stroke-width: .5px; }

.topic { height: 137px; margin-left: 409px; }
h2 { margin: 0; width: fit-content; height: 27px; padding: 1px 14px 0 15px; border-radius: 10px; background: #b9b9b9; font-size: 14px; line-height: 27px; white-space: nowrap; }
.body { padding-top: 15px; }
.hero + .topic .body { padding-top: 16px; }
p { margin: 0; font-size: 14px; line-height: 20px; white-space: nowrap; }
p.indent { padding-left: 20px; }
a { text-decoration: underline; }

.scrollbar { width: 13px; flex: none; display: flex; flex-direction: column; background: #d9d8d6; border-left: 1px solid #a9a8a4; border-right: 1px solid #a9a8a4; }
.arrow { height: 14px; flex: none; display: flex; align-items: center; justify-content: center; background: #f2f1f0; border: 1px solid #c4c3bf; border-radius: 6px 6px 0 0; }
.arrow.down { border-radius: 0 0 6px 6px; }
.arrow svg { width: 6px; height: 3px; }
.track { flex: 1; padding-top: 37px; background: linear-gradient(90deg, #d3d2d0, #e3e2e0); }
.thumb { height: 687px; border: 1px solid #9a9995; border-width: 1px 0; border-radius: 6px; background: linear-gradient(90deg, #fff, #e8e7e5); display: flex; flex-direction: column; align-items: center; justify-content: center; gap: 2px; }
.thumb i { width: 5px; height: 1px; background: #999; }
</style>
